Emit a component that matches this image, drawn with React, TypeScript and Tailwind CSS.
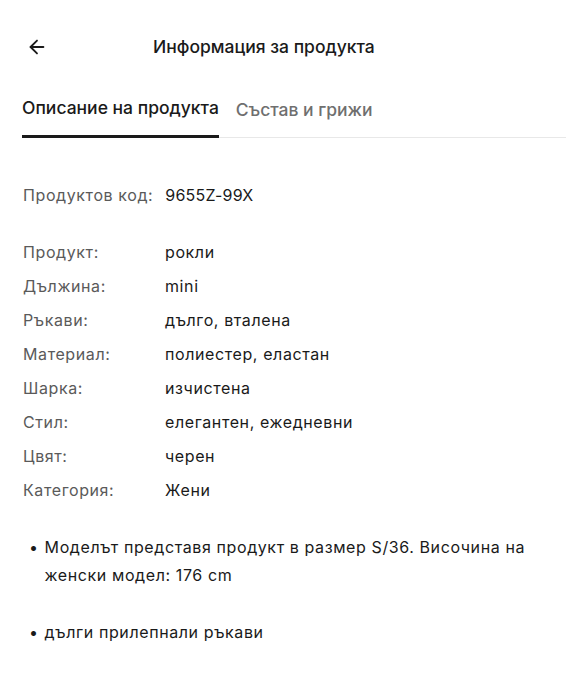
import { ArrowLeft } from 'lucide-react'

const specs: Array<[string, string]> = [
    ['Продукт:', 'рокли'],
    ['Дължина:', 'mini'],
    ['Ръкави:', 'дълго, вталена'],
    ['Материал:', 'полиестер, еластан'],
    ['Шарка:', 'изчистена'],
    ['Стил:', 'елегантен, ежедневни'],
    ['Цвят:', 'черен'],
    ['Категория:', 'Жени'],
]

export default function App() {
    return (
        <div className="min-h-[699px] bg-white font-['Inter',sans-serif] text-[#1a1a1a]">
            <div className="flex h-[94px] items-center pl-[28px]">
                <ArrowLeft className="h-[22px] w-[22px] -ml-[2px] text-[#1a1a1a]" strokeWidth={2} />
                <h1 className="ml-[105px] text-[17.5px] font-medium">Информация за продукта</h1>
            </div>

            <div className="ml-[22px] flex items-end border-b border-[#e8e8e8]">
                <div className="border-b-[3px] border-[#1a1a1a] pb-[14px] -mb-px text-[17.5px] font-medium leading-[27px]">
                    Описание на продукта
                </div>
                <div className="ml-[17px] pb-[14px] text-[17.5px] font-medium leading-[27px] text-[#6f6f6f]">
                    Състав и грижи
                </div>
            </div>

            <div className="px-[23px] pt-[43px] text-[16px] tracking-[0.6px]">
                <div className="flex h-[28px] items-center">
                    <span className="text-[#5a5a5a]">Продуктов код:</span>
                    <span className="ml-[12px] tracking-[0.2px]">9655Z-99X</span>
                </div>

                <div className="mt-[26px] flex flex-col">
                    {specs.map(([label, value]) => (
                        <div key={label} className="flex h-[34px] items-center">
                            <span className="w-[142px] text-[#5a5a5a]">{label}</span>
                            <span>{value}</span>
                        </div>
                    ))}
                </div>

                <ul className="mt-[26px] pl-[6px]">
                    <li className="flex max-w-[500px] leading-[28px]">
                        <span className="mr-[6px]">•</span>
                        <span>Моделът представя продукт в размер S/36. Височина на женски модел: 176 cm</span>
                    </li>
                    <li className="mt-[29px] flex leading-[28px]">
                        <span className="mr-[6px]">•</span>
                        <span>дълги прилепнали ръкави</span>
                    </li>
                </ul>
            </div>
        </div>
    )
}
